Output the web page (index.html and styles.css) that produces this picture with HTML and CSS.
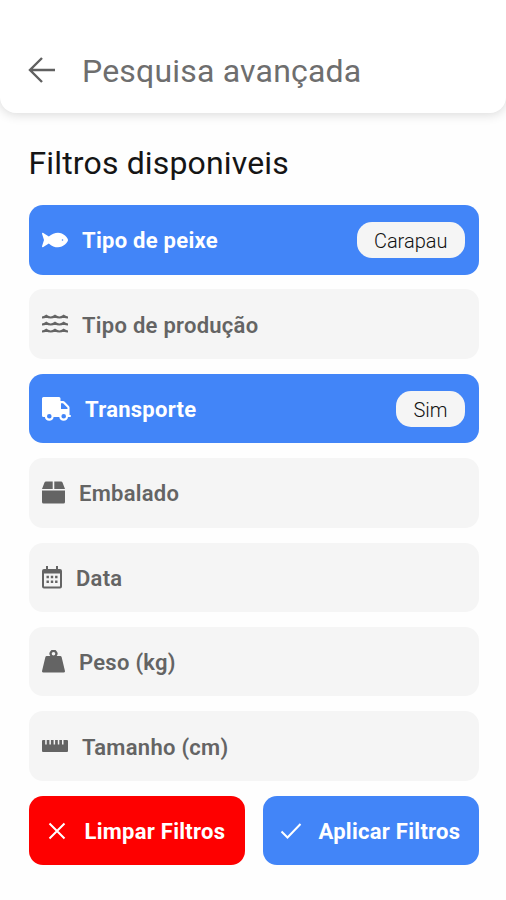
FILE: index.html
```html
<!doctype html>
<html lang="pt">
<head>
    <meta charset="utf-8">
    <title>Pesquisa avançada</title>
    <link rel="stylesheet" href="styles.css">
</head>
<body>
    <header class="top-bar">
        <svg class="back" width="28" height="28" viewBox="0 0 28 28"><path d="M27 14H2M14 2L2 14l12 12"/></svg>
        <h1>Pesquisa avançada</h1>
    </header>
    <main>
        <h2>Filtros disponiveis</h2>
        <div class="filter active">
            <svg width="26" height="16" viewBox="0 0 26 16"><path fill-rule="evenodd" d="M1.300 1C.3.4-.2 1.200.1 2.100L2 8 .1 13.900c-.3.9.2 1.700 1.200 1.100L6.800 11.400C9.500 13.900 13 15.300 16 15.300c5.400 0 10-5 10-7.300S21.400.7 16 .7C13 .7 9.500 2.100 6.800 4.600zM20.500 7.200a.8.8 0 1 1 0 1.600.8.8 0 0 1 0-1.600z"/></svg>
            <span class="name">Tipo de peixe</span>
            <span class="value">Carapau</span>
        </div>
        <div class="filter">
            <svg class="waves" width="26" height="20" viewBox="0 0 26 20"><path d="M0 3.500q2.200 0 4.300-1.700q2.200 1.700 4.350 1.700t4.350-1.700q2.200 1.700 4.350 1.700t4.350-1.700Q24 3.500 26 3.500M0 10.500q2.200 0 4.300-1.700q2.200 1.700 4.350 1.700t4.350-1.700q2.200 1.700 4.350 1.700t4.350-1.700Q24 10.500 26 10.500M0 17.500q2.200 0 4.300-1.700q2.200 1.700 4.350 1.700t4.350-1.700q2.200 1.700 4.350 1.700t4.350-1.700Q24 17.500 26 17.500"/></svg>
            <span class="name">Tipo de produção</span>
        </div>
        <div class="filter active">
            <svg width="29" height="24" viewBox="0 0 29 24"><path fill-rule="evenodd" d="M1.500 0H17q1.500 0 1.500 1.500V4H21q1 0 1.700.7l4.100 4.200q.7.700.7 1.700V18H28q1 0 1 1t-1 1H26a4.400 4.400 0 0 1-8.700 0H11.600a4.400 4.400 0 0 1-8.700 0H1.500Q0 20 0 18.500v-17Q0 0 1.500 0zM19 6.200V12h6.500v-1.200L21 6.200zM7.300 17a2.300 2.300 0 1 0 0 4.600 2.300 2.300 0 0 0 0-4.600zM21.700 17a2.300 2.300 0 1 0 0 4.600 2.300 2.300 0 0 0 0-4.600z"/></svg>
            <span class="name">Transporte</span>
            <span class="value">Sim</span>
        </div>
        <div class="filter">
            <svg width="23" height="23" viewBox="0 0 23 23"><path d="M4 .5h6.700V8H0L2.500 1.600Q2.900.5 4 .5zM12.300.5H19q1.100 0 1.500 1.100L23 8H12.300zM0 9.500h23V21q0 1.500-1.500 1.500h-20Q0 22.500 0 21z"/></svg>
            <span class="name">Embalado</span>
        </div>
        <div class="filter">
            <svg width="20" height="23" viewBox="0 0 20 23"><path fill-rule="evenodd" d="M4 0h2v3h8V0h2v3h2q2 0 2 2v15.500q0 2-2 2H2q-2 0-2-2V5q0-2 2-2h2zM2 7.500v12.500q0 .5.500.5h15q.5 0 .5-.5V7.500z"/><path d="M4.500 9.800h2.400v2.400H4.500zM8.800 9.800h2.400v2.400H8.800zM13.100 9.800h2.400v2.400h-2.400zM4.500 14.500h2.400v2.400H4.500zM8.800 14.500h2.400v2.400H8.800zM13.100 14.500h2.400v2.400h-2.400z"/></svg>
            <span class="name">Data</span>
        </div>
        <div class="filter">
            <svg width="23" height="23" viewBox="0 0 23 23"><path fill-rule="evenodd" d="M8.300 6a4 4 0 1 1 6.400 0h3.500q1.100 0 1.400 1.100l3.300 13.700q.4 1.700-1.300 1.700H1.400Q-.3 22.500.1 20.800L3.400 7.100Q3.700 6 4.800 6zM11.500 2a1.800 1.800 0 1 0 0 3.600 1.800 1.800 0 0 0 0-3.600z"/></svg>
            <span class="name">Peso (kg)</span>
        </div>
        <div class="filter">
            <svg width="26" height="12" viewBox="0 0 26 12"><path d="M1 0h2.200v4.500h1.500V0h2.700v4.500h1.500V0h2.700v4.500h1.500V0h2.700v4.500h1.500V0H20v4.500h1.500V0H25q1 0 1 1v10q0 1-1 1H1q-1 0-1-1V1q0-1 1-1z"/></svg>
            <span class="name">Tamanho (cm)</span>
        </div>
        <div class="actions">
            <button class="clear"><svg width="18" height="18" viewBox="0 0 18 18"><path d="M1.500 1.500l15 15M16.500 1.500l-15 15"/></svg>Limpar Filtros</button>
            <button class="apply"><svg width="22" height="18" viewBox="0 0 22 18"><path d="M1.500 9.500l6 6L20.500 2"/></svg>Aplicar Filtros</button>
        </div>
    </main>
</body>
</html>
```

FILE: styles.css
```css
* {
    box-sizing: border-box;
}
body {
    margin: 0;
    height: 900px;
    background: #fefefe;
    font-family: Roboto, sans-serif;
    overflow: hidden;
}
.top-bar {
    display: flex;
    align-items: center;
    height: 113px;
    padding: 27px 28px 0;
    border-radius: 0 0 16px 16px;
    background: #fff;
    box-shadow: 0 1px 12px rgba(0, 0, 0, 0.16);
}
.back {
    fill: none;
    stroke: #606060;
    stroke-width: 2.4;
}
h1 {
    margin: 2px 0 0 26px;
    font-size: 32px;
    font-weight: 400;
    line-height: 38px;
    letter-spacing: 0.2px;
    color: #6e6e6e;
}
main {
    padding: 31px 27.500px 0 28.500px;
}
h2 {
    margin: 0 0 23px;
    font-size: 32px;
    font-weight: 400;
    line-height: 38px;
    letter-spacing: 0.15px;
    color: #151515;
}
/* Filter rows */
.filter {
    display: flex;
    align-items: center;
    height: 69.500px;
    margin-bottom: 14.900px;
    padding: 0 14px 0 13.500px;
    border-radius: 14px;
    background: #f5f5f5;
    color: #646464;
}
.filter svg {
    margin-right: 14px;
    fill: currentColor;
}
.filter .waves {
    fill: none;
    stroke: currentColor;
    stroke-width: 2.2;
}
.name {
    margin-top: 2px;
    font-size: 22px;
    font-weight: 600;
    letter-spacing: 0.27px;
}
.active {
    background: #4285f8;
    color: #fff;
}
.active .name {
    font-weight: 700;
}
.value {
    height: 36px;
    margin-left: auto;
    padding: 1px 17px 0;
    border-radius: 15px;
    background: #f5f5f5;
    color: #111;
    font-size: 20px;
    font-weight: 300;
    line-height: 36px;
}
/* Bottom buttons */
.actions {
    display: grid;
    grid-template-columns: minmax(0, 1fr) minmax(0, 1fr);
    gap: 18px;
}
button {
    display: flex;
    align-items: center;
    height: 69.500px;
    padding: 2px 0 0 19px;
    border: 0;
    border-radius: 14px;
    color: #fff;
    font: 700 22px Roboto, sans-serif;
    letter-spacing: 0.27px;
    white-space: nowrap;
}
button svg {
    margin-right: 19px;
    fill: none;
    stroke: #fff;
    stroke-width: 2;
}
.clear {
    background: #fe0000;
}
.apply {
    padding-left: 17px;
    background: #4285f8;
}
.apply svg {
    margin-right: 17px;
}
```
